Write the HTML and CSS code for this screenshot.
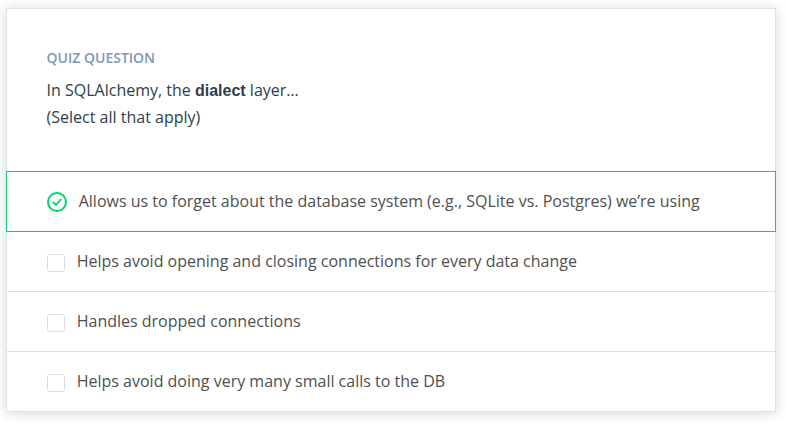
FILE: index.html
```html
<!DOCTYPE html>
<html lang="en">
<head>
<meta charset="utf-8">
<title>Quiz Question</title>
<link rel="stylesheet" href="styles.css">
</head>
<body>
<main class="quiz">
  <header class="prompt">
    <h1 class="label">QUIZ QUESTION</h1>
    <p class="question">In SQLAlchemy, the <strong>dialect</strong> layer…<br>(Select all that apply)</p>
  </header>
  <ul class="answers">
    <li class="answer selected">
      <svg class="check" viewBox="0 0 20 20"><circle cx="10" cy="10" r="9"/><path d="M5.8 10l3.2 3 5.2-6"/></svg>
      <span>Allows us to forget about the database system (e.g., SQLite vs. Postgres) we’re using</span>
    </li>
    <li class="answer"><i class="box"></i><span>Helps avoid opening and closing connections for every data change</span></li>
    <li class="answer"><i class="box"></i><span>Handles dropped connections</span></li>
    <li class="answer"><i class="box"></i><span>Helps avoid doing very many small calls to the DB</span></li>
  </ul>
</main>
</body>
</html>
```
FILE: styles.css
```css
* { box-sizing: border-box; }
body {
  margin: 0;
  min-height: 424px;
  padding: 8px 10px 0 6px;
  background: #fff;
  font-family: "Open Sans", sans-serif;
  font-size: 16px;
  color: #4f4f4f;
}
.quiz {
  height: 404px;
  border: 1px solid #dbe2e8;
  box-shadow: 0 1px 12px rgba(46, 61, 73, 0.2);
}
.prompt {
  height: 162px;
  padding: 39px 39.6px 0;
}
.label {
  margin: 0;
  font-size: 14px;
  line-height: 20px;
  font-weight: 600;
  color: #7d97b8;
}
.question {
  margin: 9px 0 0;
  line-height: 27px;
  color: #2e3d49;
}
.question strong { font-family: "Liberation Sans", sans-serif; }
.answers {
  margin: 0;
  padding: 0;
  list-style: none;
}
.answer {
  display: flex;
  align-items: flex-start;
  height: 60px;
  padding: 18px 40px 0;
  border-bottom: 1px solid #dbe0e8;
  line-height: 22px;
}
.answer:last-child { border-bottom: 0; }
.selected {
  height: 61px;
  margin: 0 -1px;
  border: 1px solid #02d36f;
}
.check {
  width: 20px;
  height: 20px;
  margin: 2px 11.7px 0 0;
  fill: none;
  stroke: #02d36f;
  stroke-width: 2;
}
.check path { stroke-width: 1.8; }
.box {
  width: 18px;
  height: 18px;
  margin: 4px 11.7px 0 0;
  border: 1px solid #d5dcea;
  border-radius: 3px;
}
```
